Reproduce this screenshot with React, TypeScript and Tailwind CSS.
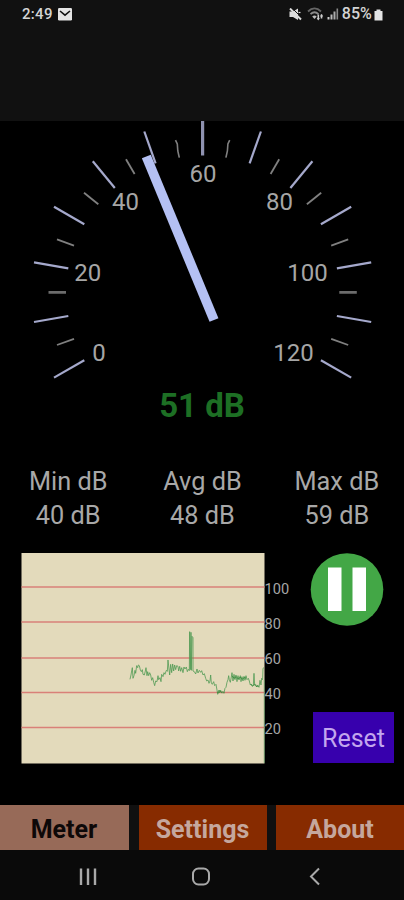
import { ReactNode } from 'react';
import clsx from 'clsx';

type Tick = { from: [number, number]; to: [number, number] };

// left half of the dial, the right half is mirrored around CENTER
const CENTER = 202.6;

const majorTicks: Tick[] = [
  { from: [54, 377.6], to: [84.3, 360.3] },
  { from: [34, 322], to: [68.3, 316] },
  { from: [34, 262.4], to: [68.3, 268.4] },
  { from: [54, 206.7], to: [84.3, 224.2] },
  { from: [92.8, 161.3], to: [114.8, 188] },
  { from: [144.3, 131.5], to: [155.6, 163.3] },
];

const minorTicks: Tick[] = [
  { from: [57, 345], to: [74, 338.8] },
  { from: [57, 239.3], to: [74, 245.7] },
  { from: [84, 192.7], to: [98.3, 204.3] },
  { from: [126, 159.2], to: [134.6, 174] },
];

const dialLabels = [
  { value: 0, x: 99, y: 361 },
  { value: 20, x: 87.7, y: 280.5 },
  { value: 40, x: 125.5, y: 209.5 },
  { value: 60, x: 203, y: 182 },
  { value: 80, x: 279.5, y: 209.5 },
  { value: 100, x: 307.5, y: 280.5 },
  { value: 120, x: 293.5, y: 361 },
];

const stats = [
  { title: 'Min dB', value: '40 dB' },
  { title: 'Avg dB', value: '48 dB' },
  { title: 'Max dB', value: '59 dB' },
];

// sampled at a third of a pixel
const history =
  '15,163 18,150 20,138 22,128 24,160 27,152 30,136 32,145 35,122 38,128 40,120 43,122 46,135 49,140 52,134 54,148 58,150 61,138 63,128 66,152 68,140 71,152 74,143 77,150 80,166 83,158 86,172 89,182 92,168 96,170 99,152 101,164 105,158 108,170 110,148 114,155 117,143 120,148 124,136 127,139 129,105 132,132 134,150 137,118 140,143 143,117 146,138 149,120 152,134 155,122 159,124 161,138 164,124 167,139 170,128 174,143 177,126 180,132 184,126 187,140 190,133 193,137 194,20 196,134 198,22 199,136 201,34 204,38 204,138 208,140 212,147 216,132 219,144 223,136 227,142 230,137 234,150 238,146 242,160 245,168 249,165 252,175 255,168 257,150 259,174 262,178 266,170 269,182 273,178 276,195 278,208 281,196 284,204 287,196 290,204 293,203 297,204 300,190 303,187 306,172 309,164 311,152 313,164 316,172 319,156 321,143 324,168 327,148 330,164 333,150 336,170 339,152 342,165 346,152 348,170 351,155 354,168 357,154 360,166 363,152 366,164 370,160 373,168 376,180 379,177 382,184 385,182 387,145 389,180 392,178 395,186 398,180 402,187 405,166 408,180 410,160 413,164 414,130 417,128';

// denser parts of the trace
const historyDense = [
  '276,201 281,204 284,196 288,202 294,200 299,204',
  '322,153 327,160 334,155 340,162 346,156 352,163 358,157 363,160',
  '377,179 383,182 388,179 394,184 400,184',
];

const StatusBar = () => (
  <div className="flex h-[121px] items-start justify-between bg-[#111111] pt-[5px] pr-[21px] pl-[22px] text-[15px] leading-[18px] font-medium text-[#d4d4d4]">
    <div className="flex items-center gap-[5px]">
      <span className="tracking-[0.3px]">2:49</span>
      <svg width="14" height="13" viewBox="0 0 14 13">
        <rect width="14" height="12.5" rx="1.2" fill="#e4e4e4" />
        <path d="M2 3l5 4.2L12 3" fill="none" stroke="#111111" strokeWidth="1.6" />
      </svg>
    </div>
    <div className="flex items-center">
      <svg className="mr-[5px]" width="13" height="13" viewBox="0 0 13 13" fill="none">
        <path d="M0.500 3.500h3.500L9 0.500V12L4 9H0.500z" fill="#dddddd" />
        <path d="M3 0L12.500 9.500" stroke="#111111" strokeWidth="1" />
        <path d="M1 0.500L12 11.500" stroke="#dddddd" strokeWidth="1.900" />
        <path d="M9.500 4.500h2" stroke="#dddddd" strokeWidth="1.200" />
      </svg>
      <svg className="mr-[3px]" width="17" height="14" viewBox="0 0 17 14" fill="none">
        <path d="M1 4.500C5 0.500 10 0.500 14 4.500" stroke="#666666" strokeWidth="1.800" />
        <path d="M3.500 7.200c2.500-2.500 5.500-2.500 8 0" stroke="#8a8a8a" strokeWidth="1.800" />
        <path d="M5.200 9.500c1.500-1.500 3-1.500 4.500 0L7.500 12z" fill="#bbbbbb" />
        <path d="M11.300 7.500v5M14.500 7.500v4" stroke="#cccccc" strokeWidth="1.600" />
        <path d="M9.800 11l1.500 2.500 1.500-2.500zM13 9.500L14.500 7l1.700 2.500z" fill="#cccccc" />
      </svg>
      <svg className="mr-[3px]" width="12" height="12" viewBox="0 0 12 12">
        <rect x="0.500" y="9" width="2" height="2.500" fill="#cccccc" />
        <rect x="3.500" y="6.500" width="2" height="5" fill="#bbbbbb" />
        <rect x="6.500" y="3.500" width="2" height="8" fill="#aaaaaa" />
        <rect x="9.500" y="0.500" width="1.600" height="11" fill="#8a8a8a" />
      </svg>
      <span className="text-[16px] tracking-[0.1px]">85%</span>
      <svg className="mt-px ml-[2px]" width="9" height="12" viewBox="0 0 9 12">
        <path d="M2.500 0.500h4v1.500h2v9.500h-8V2h2z" fill="#e4e4e4" />
      </svg>
    </div>
  </div>
);

const TickLine = ({ tick, minor }: { tick: Tick; minor?: boolean }) => {
  const stroke = minor ? '#808080' : '#a5a9cc';
  const width = minor ? 1.8 : 2.2;
  const { from, to } = tick;
  return (
    <>
      <line x1={from[0]} y1={from[1]} x2={to[0]} y2={to[1]} stroke={stroke} strokeWidth={width} />
      <line
        x1={CENTER * 2 - from[0]}
        y1={from[1]}
        x2={CENTER * 2 - to[0]}
        y2={to[1]}
        stroke={stroke}
        strokeWidth={width}
      />
    </>
  );
};

const Dial = () => (
  <svg className="block" width="404" height="262" viewBox="0 121 404 262">
    {majorTicks.map((tick, i) => (
      <TickLine key={i} tick={tick} />
    ))}
    {minorTicks.map((tick, i) => (
      <TickLine key={i} tick={tick} minor />
    ))}
    <path
      d="M175.500 140.200l1.800 3.800l0.500 7l1.500 6.700M229.700 140.200l-1.800 3.800l-0.500 7l-1.500 6.700"
      fill="none"
      stroke="#808080"
      strokeWidth="1.600"
    />
    <path d="M202.600 121v34.500" stroke="#8f92b0" strokeWidth="3.200" />
    <path d="M48.500 292.400h17.500M339.300 292.400h17.500" stroke="#6c6c6c" strokeWidth="2.800" />
    {dialLabels.map((label) => (
      <text key={label.value} x={label.x} y={label.y} fontSize="24" textAnchor="middle" fill="#a6a6a6">
        {label.value}
      </text>
    ))}
    <line x1="146.300" y1="156.500" x2="214" y2="320" stroke="#b4c0f3" strokeWidth="9.600" />
  </svg>
);

const HistoryChart = () => (
  <svg className="block" width="300" height="212" viewBox="0 0 300 212">
    <rect x="21.500" y="1" width="243" height="210.500" fill="#e3dabb" />
    {[35, 70, 106, 140.500, 175.500].map((y) => (
      <line key={y} x1="21.500" x2="264.500" y1={y} y2={y} stroke="#d98078" strokeWidth="1.600" />
    ))}
    <path d="M264.300 128v83" stroke="#5c9160" strokeWidth="0.800" />
    <g transform="translate(125 73) scale(0.3333)" fill="none">
      <polyline points={history} stroke="#4f9a52" strokeOpacity="0.850" strokeWidth="2.800" />
      {historyDense.map((points) => (
        <polyline key={points} points={points} stroke="#2f8434" strokeOpacity="0.700" strokeWidth="3" />
      ))}
    </g>
    {['100', '80', '60', '40', '20'].map((label, i) => (
      <text key={label} x="264.500" y={41.500 + i * 35.1} fontSize="14.600" fill="#a6a6a6">
        {label}
      </text>
    ))}
  </svg>
);

const TabButton = ({ active, children }: { active?: boolean; children: ReactNode }) => (
  <button
    className={clsx(
      'h-[45px] pt-[4px] text-[25px] leading-[41px] font-bold',
      active ? 'bg-[#976a58] pr-px text-[#0d0808]' : 'bg-[#872b00] text-[#c5a79d]'
    )}
  >
    {children}
  </button>
);

const App = () => {
  return (
    <div className="flex h-[900px] w-[404px] flex-col overflow-hidden bg-black font-['Roboto',sans-serif]">
      <StatusBar />
      <Dial />
      <div className="h-[82px] pt-[3px] text-center text-[33px] leading-[40px] font-bold text-[#1d6f24]">51 dB</div>

      <div className="grid h-[87px] grid-cols-3 pl-px text-center text-[25.300px] leading-[34px] text-[#a8a8a8]">
        {stats.map((stat) => (
          <div key={stat.title}>
            <div>{stat.title}</div>
            <div>{stat.value}</div>
          </div>
        ))}
      </div>

      <div className="flex h-[253px]">
        <HistoryChart />
        <div className="flex h-[211px] flex-col justify-between pl-[10px]">
          <svg className="mt-px" width="74" height="74" viewBox="0 0 74 74">
            <circle cx="37" cy="36.500" r="36.300" fill="#43a746" />
            <path d="M18 14.500h13.500v43.500H18zM42.500 14.500H56v43.500H42.500z" fill="#ffffff" />
          </svg>
          <button className="ml-[3px] h-[51px] w-[81px] bg-[#3700ad] pt-[3px] text-[25px] text-[#c2a6ee]">
            Reset
          </button>
        </div>
      </div>

      <div className="grid h-[45px] grid-cols-[129px_128px_128px] justify-between bg-[#101010]">
        <TabButton active>Meter</TabButton>
        <TabButton>Settings</TabButton>
        <TabButton>About</TabButton>
      </div>

      <div className="grow bg-[#0a0a0a]">
        <svg width="404" height="50" viewBox="0 0 404 50" fill="none" stroke="#a9a9a9">
          <path d="M81 18.500v16.500M88 18.500v16.500M95 18.500v16.500" strokeWidth="2.400" />
          <rect x="193" y="18.500" width="16" height="16" rx="5.500" strokeWidth="2" />
          <path d="M319 18.500l-8 8 8 8" strokeWidth="2" />
        </svg>
      </div>
    </div>
  );
};

export default App;
